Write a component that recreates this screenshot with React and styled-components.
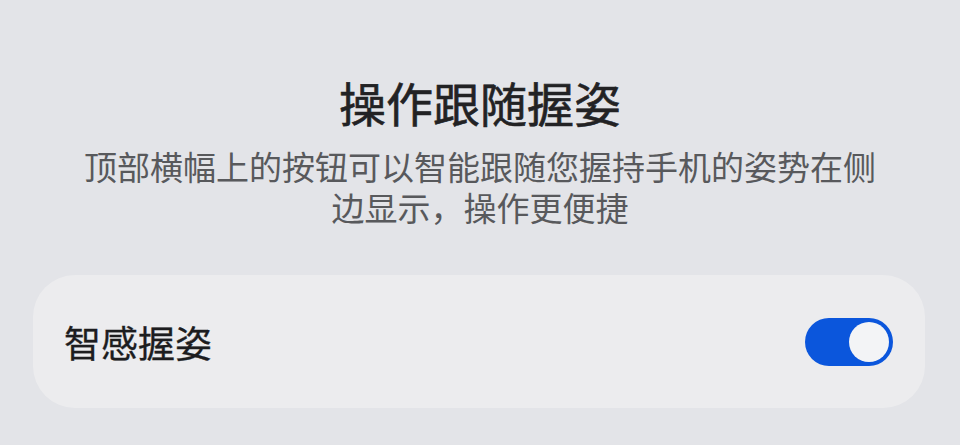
import React, { useState } from "react";
import styled, { createGlobalStyle } from "styled-components";

const GlobalStyle = createGlobalStyle`
  html, body {
    margin: 0;
    padding: 0;
    background: #e3e4e8;
  }
  body {
    font-family: "Noto Sans CJK SC", "Noto Sans", sans-serif;
  }
`;

const Page = styled.div`
  display: flex;
  flex-direction: column;
  align-items: center;
  height: 445px;
  padding-top: 72px;
  box-sizing: border-box;
`;

const Title = styled.h1`
  margin: 0;
  font-size: 47px;
  line-height: 60px;
  font-weight: 400;
  color: #222224;
  -webkit-text-stroke: 0.6px #222224;
`;

const Description = styled.p`
  margin: 14px 0 0;
  max-width: 810px;
  font-size: 33px;
  line-height: 41px;
  font-weight: 400;
  color: #58595c;
  text-align: center;
`;

const Card = styled.div`
  display: flex;
  align-items: center;
  justify-content: space-between;
  align-self: stretch;
  margin: 47px 35px 0 33px;
  height: 133px;
  padding: 0 32px 0 31px;
  background: #ececee;
  border-radius: 42px;
`;

const Label = styled.span`
  font-size: 37px;
  line-height: 48px;
  font-weight: 400;
  color: #1d1d1f;
  -webkit-text-stroke: 0.3px #1d1d1f;
`;

const Track = styled.button`
  position: relative;
  width: 88px;
  height: 48px;
  padding: 0;
  border: none;
  border-radius: 24px;
  background: ${p => (p.on ? "#0b56dc" : "#c9cacd")};
  cursor: pointer;
`;

const Knob = styled.span`
  position: absolute;
  top: 4px;
  left: ${p => (p.on ? "44px" : "4px")};
  width: 40px;
  height: 40px;
  border-radius: 50%;
  background: #f3f4f6;
  transition: left 0.2s;
`;

function Switch() {
  const [on, setOn] = useState(true);
  return (
    <Track on={on ? 1 : 0} onClick={() => setOn(!on)} aria-pressed={on}>
      <Knob on={on ? 1 : 0} />
    </Track>
  );
}

export default function App() {
  return (
    <>
      <GlobalStyle />
      <Page>
        <Title>操作跟随握姿</Title>
        <Description>
          顶部横幅上的按钮可以智能跟随您握持手机的姿势在侧边显示，操作更便捷
        </Description>
        <Card>
          <Label>智感握姿</Label>
          <Switch />
        </Card>
      </Page>
    </>
  );
}
